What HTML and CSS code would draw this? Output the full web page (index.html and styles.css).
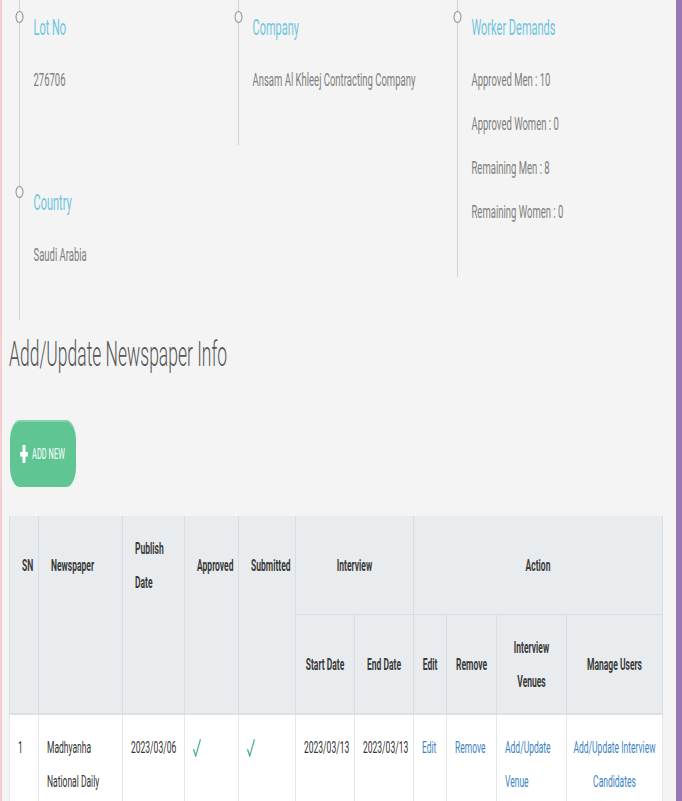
FILE: index.html
```html
<!DOCTYPE html>
<html lang="en">
<head>
<meta charset="utf-8">
<title>Newspaper Info</title>
<link rel="stylesheet" href="styles.css">
</head>
<body>
<div class="viewport">
<div class="page">
  <div class="timeline">
    <div class="tl-col">
      <div class="tl-item">
        <span class="dot"></span>
        <div class="tl-title">Lot No</div>
        <div class="tl-value">276706</div>
      </div>
      <div class="tl-item">
        <span class="dot"></span>
        <div class="tl-title">Country</div>
        <div class="tl-value">Saudi Arabia</div>
      </div>
    </div>
    <div class="tl-col">
      <div class="tl-item">
        <span class="dot"></span>
        <div class="tl-title">Company</div>
        <div class="tl-value">Ansam Al Khleej Contracting Company</div>
      </div>
    </div>
    <div class="tl-col">
      <div class="tl-item">
        <span class="dot"></span>
        <div class="tl-title">Worker Demands</div>
        <div class="tl-value">Approved Men : 10</div>
        <div class="tl-value">Approved Women : 0</div>
        <div class="tl-value">Remaining Men : 8</div>
        <div class="tl-value">Remaining Women : 0</div>
      </div>
    </div>
  </div>

  <div class="content">
    <h2 class="heading">Add/Update Newspaper Info</h2>
    <a class="btn-add" href="#">
      <svg class="plus" width="16" height="18" viewBox="0 0 16 18"><rect x="5" y="0" width="6" height="18" fill="#fff"/><rect x="0" y="7" width="16" height="4.5" fill="#fff"/></svg>
      <span>ADD NEW</span>
    </a>

    <table class="grid">
      <colgroup>
        <col class="w58"><col class="w168"><col class="w124"><col class="w108"><col class="w114"><col class="w118"><col class="w118"><col class="w66"><col class="w100"><col class="w140"><col class="w192">
      </colgroup>
      <thead>
        <tr class="hr1">
          <th class="hl">SN</th>
          <th class="hl">Newspaper</th>
          <th class="hl">Publish Date</th>
          <th class="hl">Approved</th>
          <th class="hl">Submitted</th>
          <th class="hc" colspan="2">Interview</th>
          <th class="hc" colspan="4">Action</th>
        </tr>
        <tr class="hr2">
          <th class="blank"></th>
          <th class="blank"></th>
          <th class="blank"></th>
          <th class="blank"></th>
          <th class="blank"></th>
          <th class="hc">Start Date</th>
          <th class="hc">End Date</th>
          <th class="hc">Edit</th>
          <th class="hc">Remove</th>
          <th class="hc">Interview Venues</th>
          <th class="hc">Manage Users</th>
        </tr>
      </thead>
      <tbody>
        <tr>
          <td>1</td>
          <td>Madhyanha National Daily</td>
          <td>2023/03/06</td>
          <td><svg class="tick" width="16" height="18" viewBox="0 0 16 18"><polyline points="1.5,11 5.5,17 14.5,1" fill="none" stroke="#4fb48c" stroke-width="2.4" stroke-linecap="round" stroke-linejoin="round"/></svg></td>
          <td><svg class="tick" width="16" height="18" viewBox="0 0 16 18"><polyline points="1.5,11 5.5,17 14.5,1" fill="none" stroke="#4fb48c" stroke-width="2.4" stroke-linecap="round" stroke-linejoin="round"/></svg></td>
          <td>2023/03/13</td>
          <td>2023/03/13</td>
          <td><a href="#" class="lnk">Edit</a></td>
          <td><a href="#" class="lnk">Remove</a></td>
          <td><a href="#" class="lnk">Add/Update Venue</a></td>
          <td class="center"><a href="#" class="lnk">Add/Update Interview Candidates</a></td>
        </tr>
      </tbody>
    </table>
  </div>
</div>
</div>
</body>
</html>
```

FILE: styles.css
```css
html, body {
  margin: 0;
  padding: 0;
  overflow: hidden;
  background: #f4f4f4;
}

.viewport {
  width: 682px;
  height: 801px;
  overflow: hidden;
}

.page {
  width: 1364px;
  min-height: 801px;
  box-sizing: border-box;
  border-left: 4px solid #f6cdd0;
  border-right: 12px solid #9877b3;
  transform: scaleX(0.5);
  transform-origin: 0 0;
  font-family: Roboto, "Liberation Sans", sans-serif;
  background: #f4f4f4;
}

/* timeline */
.timeline {
  display: flex;
  align-items: flex-start;
  padding-left: 34px;
}

.tl-col {
  width: 440px;
  border-left: 2px solid #d2d2d2;
}

.tl-item {
  position: relative;
  padding: 12px 0 51px 27px;
}

.tl-item + .tl-item {
  margin-top: 30px;
}

.dot {
  position: absolute;
  left: -9px;
  top: 11px;
  width: 12px;
  height: 10px;
  border: 1px solid #8c8c8c;
  border-left-width: 2px;
  border-right-width: 2px;
  border-radius: 50%;
  background: #f4f4f4;
}

.tl-title {
  font-size: 22px;
  line-height: 32px;
  color: #6fc4e0;
}

.tl-value {
  font-size: 19px;
  line-height: 28px;
  color: #7e7e7e;
  margin-top: 16px;
}

.tl-title + .tl-value {
  margin-top: 22px;
}

/* content */
.content {
  padding-left: 14px;
}

.heading {
  margin: 14px 0 0 0;
  font-size: 35px;
  line-height: 42px;
  font-weight: 300;
  color: #555;
}

.btn-add {
  display: inline-flex;
  align-items: center;
  gap: 8px;
  margin-top: 44px;
  margin-left: 2px;
  height: 67px;
  padding: 0 22px 0 20px;
  border-radius: 20px;
  background: #5ec593;
  box-shadow: inset 0 2px 0 rgba(255,255,255,0.25);
  color: #fff;
  text-decoration: none;
  font-size: 15px;
}

.plus {
  display: block;
}

/* table */
.grid {
  margin-top: 29px;
  width: 1306px;
  table-layout: fixed;
  border-collapse: collapse;
  font-size: 17px;
  line-height: 34px;
  color: #333;
}

.w58 { width: 58px; }
.w168 { width: 168px; }
.w124 { width: 124px; }
.w108 { width: 108px; }
.w114 { width: 114px; }
.w118 { width: 118px; }
.w66 { width: 66px; }
.w100 { width: 100px; }
.w140 { width: 140px; }
.w192 { width: 192px; }

.grid th {
  background: #e9ecef;
  color: #3a3a3a;
  font-weight: 700;
  vertical-align: middle;
  border-style: solid;
  border-color: #d9dde1;
  border-width: 1px 2px;
  height: 68px;
}

.grid thead tr:first-child th {
  border-top: 0;
}

.grid th.hl {
  text-align: left;
  padding: 15px 10px 15px 24px;
  border-bottom: 0;
}

.grid th.hc {
  text-align: center;
  padding: 15px 8px;
}

.grid th.blank {
  border-top: 0;
  padding: 15px 8px;
}

.grid thead tr:last-child th {
  border-bottom: 2px solid #dcdfe3;
}

.grid td {
  background: #fff;
  vertical-align: top;
  padding: 15px 16px;
  border-style: solid;
  border-color: #e4e6e8;
  border-width: 1px 2px;
  color: #333;
}

.grid td.center {
  text-align: center;
  padding: 15px 12px;
}

.tick {
  display: block;
  margin-top: 9px;
}

.lnk {
  color: #3d84c4;
  text-decoration: none;
}
```
